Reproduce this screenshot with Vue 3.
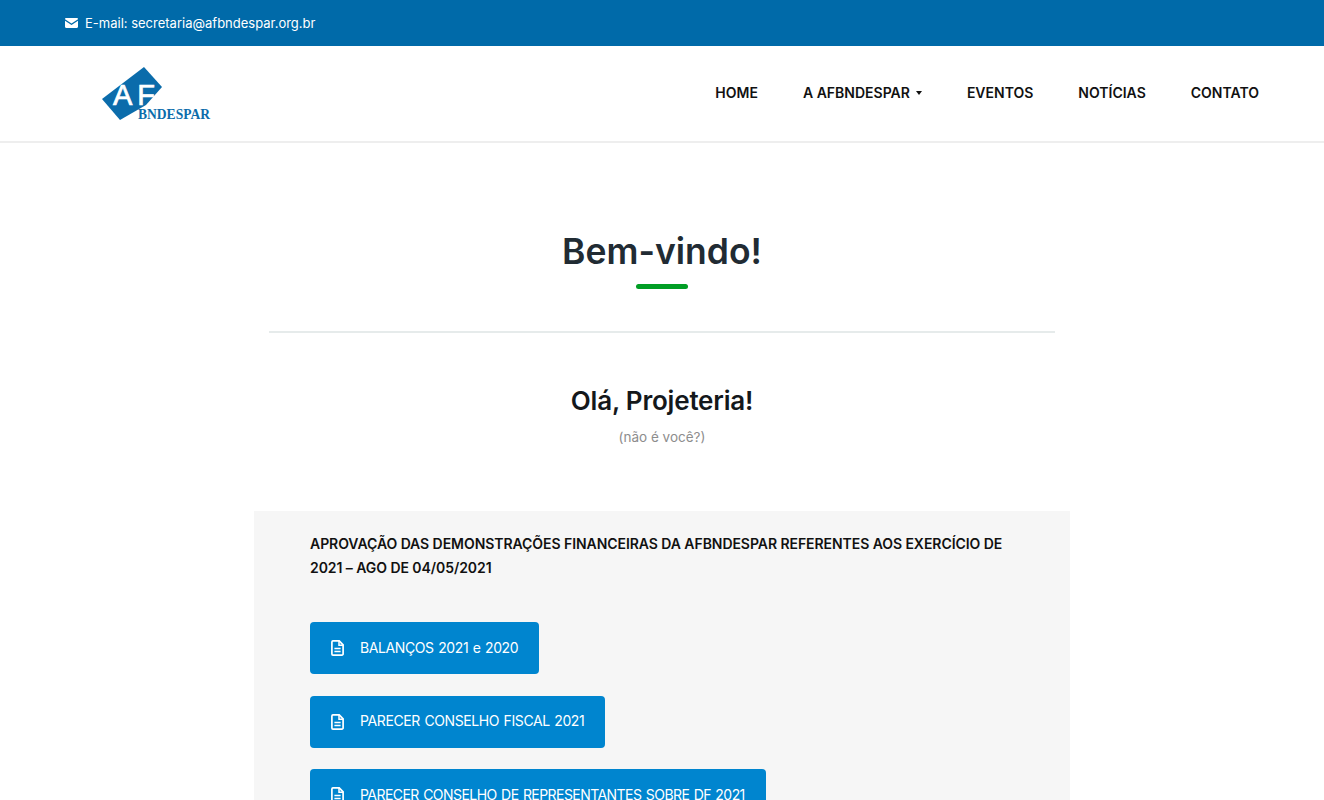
<template>
  <div class="page">
    <div class="topbar">
      <svg class="mail" viewBox="0 0 13 10" width="13" height="10">
        <path d="M0 1.2C0 .5.5 0 1.2 0h10.600c.7 0 1.200.5 1.200 1.200L6.500 5.400z" fill="#fff" />
        <path d="M0 2.800v6c0 .7.5 1.200 1.200 1.200h10.600c.7 0 1.200-.5 1.200-1.200v-6L6.500 7z" fill="#fff" />
      </svg>
      <span>E-mail: secretaria@afbndespar.org.br</span>
    </div>

    <header class="navbar">
      <svg class="logo" viewBox="0 0 112 62" width="112" height="62">
        <path d="M44 3 L62 23 L46 41 L20 56 L2 35 Z" fill="#0b6cab" />
        <text x="13" y="41" class="logo-af">AF</text>
        <text x="38" y="55" class="logo-name" textLength="72" lengthAdjust="spacingAndGlyphs">BNDESPAR</text>
      </svg>
      <nav class="menu">
        <a v-for="item in menu" :key="item.label" class="menu-item">
          {{ item.label }}
          <span v-if="item.dropdown" class="caret"></span>
        </a>
      </nav>
    </header>

    <main class="content">
      <h1 class="title">Bem-vindo!</h1>
      <div class="title-bar"></div>
      <hr class="divider" />
      <h2 class="hello">Olá, Projeteria!</h2>
      <p class="not-you">(não é você?)</p>

      <section class="panel">
        <h3 class="panel-title">
          APROVAÇÃO DAS DEMONSTRAÇÕES FINANCEIRAS DA AFBNDESPAR REFERENTES AOS EXERCÍCIO DE<br />
          2021 – AGO DE 04/05/2021
        </h3>
        <div class="docs">
          <a v-for="doc in docs" :key="doc" :class="['doc-btn', { tight: doc.length > 40 }]">
            <svg viewBox="0 0 13 16" width="13" height="16" fill="none" stroke="#fff">
              <path d="M2 .9h6.200l3.900 4v9a1.200 1.200 0 0 1-1.200 1.200H2A1.200 1.200 0 0 1 .9 13.900V2A1.200 1.200 0 0 1 2 .9z" stroke-width="1.700" />
              <path d="M8 1v4.200h4.200M3.400 8.600h6.200M3.400 11.600h6.200" stroke-width="1.500" />
            </svg>
            <span>{{ doc }}</span>
          </a>
        </div>
      </section>
    </main>
  </div>
</template>

<script setup>
const menu = [
  { label: 'HOME' },
  { label: 'A AFBNDESPAR', dropdown: true },
  { label: 'EVENTOS' },
  { label: 'NOTÍCIAS' },
  { label: 'CONTATO' },
]

const docs = [
  'BALANÇOS 2021 e 2020',
  'PARECER CONSELHO FISCAL 2021',
  'PARECER CONSELHO DE REPRESENTANTES SOBRE DF 2021',
]
</script>

<style>
html,
body {
  margin: 0;
  overflow: hidden;
}
</style>

<style scoped>
.page {
  height: 800px;
  overflow: hidden;
  background: #fff;
  font-family: Inter, 'Open Sans', sans-serif;
}

.topbar {
  height: 46px;
  box-sizing: border-box;
  padding-left: 65px;
  display: flex;
  align-items: center;
  gap: 7px;
  background: #006aa9;
  color: #fff;
  font-size: 13px;
}

.mail {
  flex: none;
}

.navbar {
  height: 97px;
  box-sizing: border-box;
  padding: 0 65px 2px 100px;
  display: flex;
  align-items: center;
  justify-content: space-between;
  border-bottom: 2px solid #eee;
}

.logo {
  margin-top: 5px;
}

.logo-af {
  font-family: 'Liberation Sans', sans-serif;
  font-size: 29px;
  letter-spacing: 5px;
  fill: #fff;
  stroke: #fff;
  stroke-width: 0.7px;
}

.logo-name {
  font-family: 'Liberation Serif', serif;
  font-weight: 700;
  font-size: 15px;
  fill: #0b6cab;
}

.menu {
  display: flex;
  gap: 45px;
}

.menu-item {
  display: flex;
  align-items: center;
  color: #111;
  font-size: 14px;
  font-weight: 600;
}

.caret {
  margin-left: 6px;
  border-top: 4px solid #111;
  border-left: 3px solid transparent;
  border-right: 3px solid transparent;
}

.content {
  display: flex;
  flex-direction: column;
  align-items: center;
}

.title {
  margin: 86px 0 0;
  color: #212b33;
  font-size: 35.500px;
  line-height: 46px;
  font-weight: 600;
}

.title-bar {
  width: 52px;
  height: 5px;
  margin-top: 9px;
  border-radius: 3px;
  background: #019e25;
}

.divider {
  width: 786px;
  margin: 42px 0 0;
  border: 0;
  border-top: 2px solid #e6ebeb;
}

.hello {
  margin: 51px 0 0;
  color: #14181b;
  font-size: 26px;
  line-height: 34px;
  font-weight: 600;
  letter-spacing: -0.2px;
}

.not-you {
  margin: 9px 0 0;
  color: #8d8d8d;
  font-size: 13.500px;
  line-height: 20px;
}

.panel {
  width: 816px;
  box-sizing: border-box;
  margin-top: 64px;
  padding: 21px 56px 40px;
  background: #f6f6f6;
}

.panel-title {
  margin: 0;
  color: #111;
  font-size: 14px;
  line-height: 24px;
  font-weight: 600;
  letter-spacing: -0.06px;
}

.docs {
  margin-top: 42px;
  display: flex;
  flex-direction: column;
  align-items: flex-start;
  gap: 21.500px;
}

.doc-btn {
  height: 52px;
  box-sizing: border-box;
  padding: 0 21px;
  display: flex;
  align-items: center;
  gap: 16px;
  border-radius: 4px;
  background: #0085cf;
  color: #fff;
  font-size: 14px;
  letter-spacing: -0.4px;
  word-spacing: 1px;
}

.doc-btn span {
  padding-bottom: 2px;
}

.tight {
  letter-spacing: -0.55px;
}
</style>
